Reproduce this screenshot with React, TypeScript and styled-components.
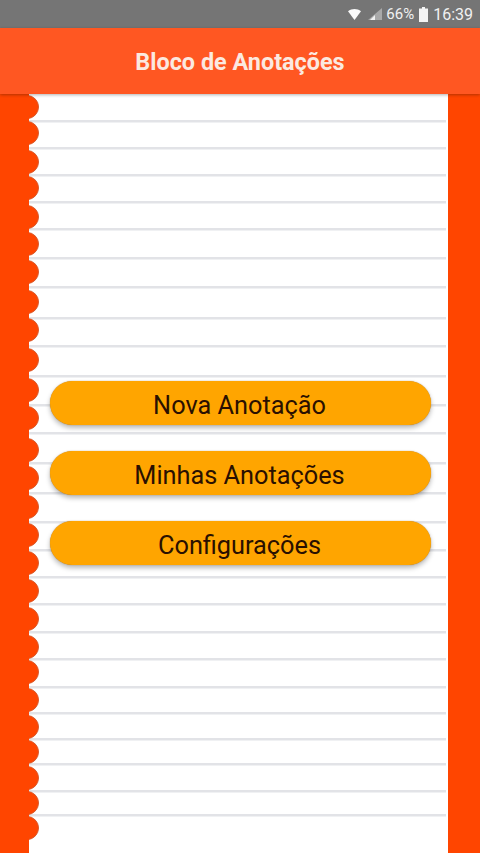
import React from "react";
import styled, { createGlobalStyle } from "styled-components";

const GlobalStyle = createGlobalStyle`
  html, body { margin: 0; padding: 0; height: 100%; background: #fff; }
  #root { height: 100%; }
  * { box-sizing: border-box; }
`;

const Screen = styled.div`
  width: 480px;
  height: 853px;
  display: flex;
  flex-direction: column;
  overflow: hidden;
  font-family: Roboto, "Liberation Sans", sans-serif;
`;

const StatusBar = styled.div`
  height: 28px;
  flex: none;
  background: #757575;
  color: #f1f1f1;
  display: flex;
  align-items: center;
  justify-content: flex-end;
  padding-right: 7px;
`;

const WifiIcon = styled.svg`
  width: 13px;
  height: 11px;
  margin-right: 7px;
`;

const SignalIcon = styled.svg`
  width: 14px;
  height: 12px;
  margin-right: 4px;
`;

const Percent = styled.span`
  font-size: 15px;
  margin-right: 5px;
`;

const BatteryIcon = styled.svg`
  width: 9px;
  height: 15px;
  margin-right: 5px;
`;

const Clock = styled.span`
  font-size: 16px;
`;

const AppBar = styled.header`
  height: 66px;
  flex: none;
  background: #ff5722;
  color: #fbe9e0;
  display: flex;
  align-items: center;
  justify-content: center;
  position: relative;
  z-index: 2;
  box-shadow: 0 1px 3px rgba(0, 0, 0, 0.3);
`;

const Title = styled.h1`
  margin: 0;
  font-size: 23.4px;
  font-weight: 700;
  padding: 4px 0 0 0;
  line-height: 1;
`;

const Body = styled.main`
  flex: 1;
  display: flex;
  min-height: 0;
`;

const LeftStrip = styled.div`
  width: 29px;
  flex: none;
  background: #ff4500;
  position: relative;
  z-index: 1;
`;

const Scallops = styled.svg`
  position: absolute;
  top: 0;
  left: 0;
  width: 40px;
  height: 759px;
`;

const RightStrip = styled.div`
  width: 32px;
  flex: none;
  background: #ff4500;
`;

const Paper = styled.section`
  flex: 1;
  position: relative;
  background: #fff;
  display: flex;
  flex-direction: column;
  justify-content: center;
  gap: 26px;
  padding: 0 17px 1px 21px;
`;

const RuledLines = styled.svg`
  position: absolute;
  top: 0;
  left: 0;
  width: 419px;
  height: 759px;
`;

const MenuButton = styled.button`
  position: relative;
  height: 44px;
  border: none;
  border-radius: 22px;
  background: #ffa500;
  color: #2a1000;
  font-family: inherit;
  font-size: 25.3px;
  font-weight: 400;
  padding: 4px 2px 0 0;
  box-shadow: 0 0 1px rgba(150, 90, 0, 0.8), 0 3px 5px rgba(0, 0, 0, 0.28);
`;

const scallopY = [107, 133, 162, 188, 217, 244, 272, 302, 330, 360, 390, 418, 450, 478, 507, 535, 563, 591, 619, 647, 672, 700, 727, 752, 778, 803, 828];
const lineY = [121, 148, 175, 202, 229, 258, 287, 318, 346, 376, 405, 433, 463, 493, 522, 550, 577, 604, 632, 659, 687, 713, 739, 764, 791, 815];

const labels = ["Nova Anotação", "Minhas Anotações", "Configurações"];

export default function App() {
  return (
    <Screen>
      <GlobalStyle />
      <StatusBar>
        <WifiIcon viewBox="0 0 13 11">
          <path d="M0 2.2C3.6-.7 9.4-.7 13 2.2L6.5 11Z" fill="#fafafa" />
        </WifiIcon>
        <SignalIcon viewBox="0 0 14 12">
          <path d="M14 0V12H0Z" fill="#a9a9a9" />
          <path d="M7 7V12H2Z" fill="#f1f1f1" />
        </SignalIcon>
        <Percent>66%</Percent>
        <BatteryIcon viewBox="0 0 9 15">
          <path d="M3 0H6V1.5H9V15H0V1.5H3Z" fill="#f4f4f4" />
        </BatteryIcon>
        <Clock>16:39</Clock>
      </StatusBar>
      <AppBar>
        <Title>Bloco de Anotações</Title>
      </AppBar>
      <Body>
        <LeftStrip>
          <Scallops viewBox="0 0 40 759">
            {scallopY.map((y) => (
              <circle key={y} cx="27" cy={y - 94} r="11.5" fill="#ff4500" stroke="#d95a2c" strokeWidth="1" />
            ))}
            <rect x="0" y="0" width="29" height="759" fill="#ff4500" />
          </Scallops>
        </LeftStrip>
        <Paper>
          <RuledLines viewBox="0 0 419 759">
            {lineY.map((y) => (
              <rect key={y} x="0" y={y - 95} width="417" height="2.5" fill="#e2e3e7" />
            ))}
          </RuledLines>
          {labels.map((label) => (
            <MenuButton key={label}>{label}</MenuButton>
          ))}
        </Paper>
        <RightStrip />
      </Body>
    </Screen>
  );
}
